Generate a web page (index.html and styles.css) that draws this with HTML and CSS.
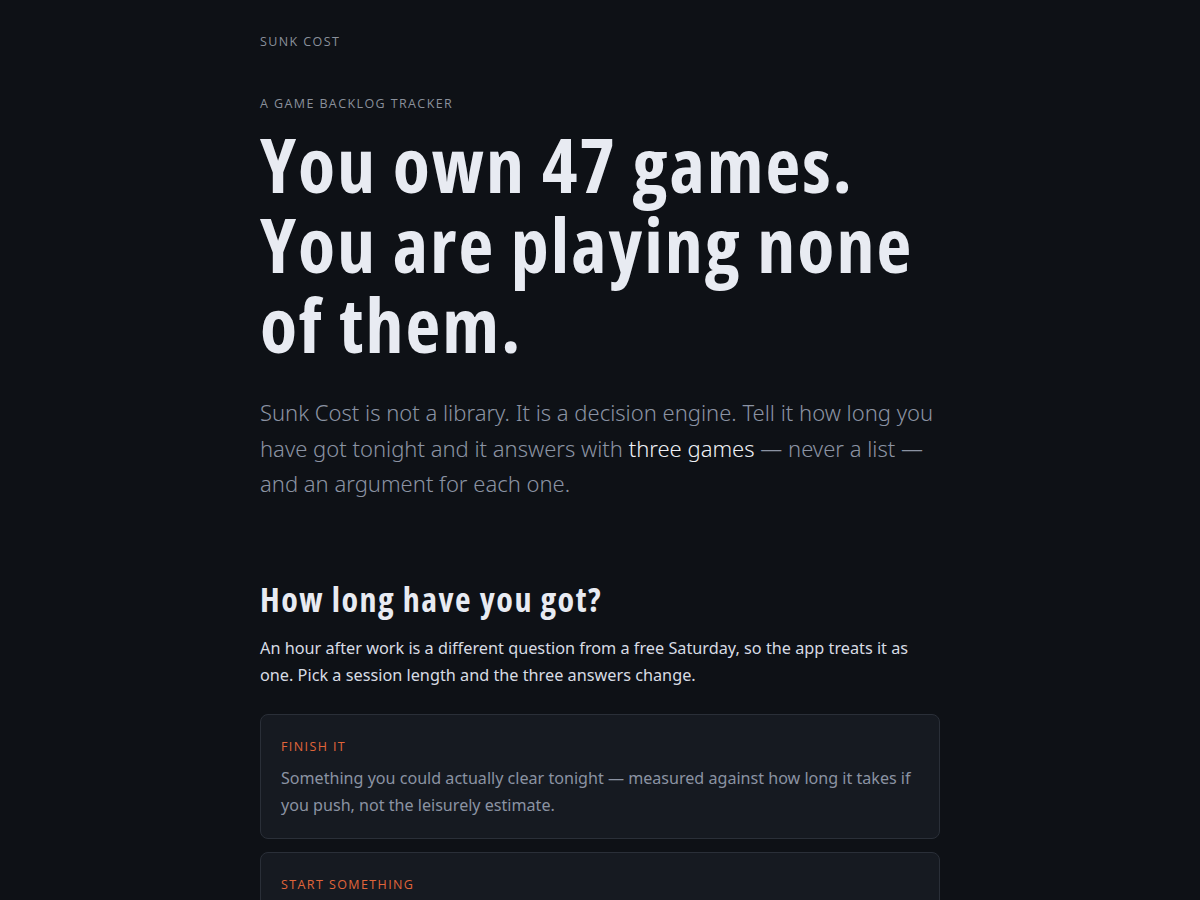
FILE: index.html
```html
<!DOCTYPE html>
<html lang="en">
<head>
<meta charset="utf-8">
<title>Sunk Cost</title>
<link rel="stylesheet" href="styles.css">
</head>
<body>
<main class="page">
  <header class="brand">SUNK COST</header>
  <section class="hero">
    <p class="eyebrow">A GAME BACKLOG TRACKER</p>
    <h1 class="title">You own 47 games.<br>You are playing none of them.</h1>
    <p class="lead">Sunk Cost is not a library. It is a decision engine. Tell it how long you have got tonight and it answers with <span class="hl">three games</span> — never a list — and an argument for each one.</p>
  </section>
  <section class="session">
    <h2 class="section-title">How long have you got?</h2>
    <p class="section-text">An hour after work is a different question from a free Saturday, so the app treats it as one. Pick a session length and the three answers change.</p>
    <div class="cards">
      <div class="card">
        <p class="card-label">FINISH IT</p>
        <p class="card-text">Something you could actually clear tonight — measured against how long it takes if you push, not the leisurely estimate.</p>
      </div>
      <div class="card">
        <p class="card-label">START SOMETHING</p>
        <p class="card-text">Something new that respects the time you have — a game whose opening hours are worth sitting down for.</p>
      </div>
    </div>
  </section>
</main>
</body>
</html>
```
FILE: styles.css
```css
html, body {
  margin: 0;
  padding: 0;
  background: #0e1116;
}
body {
  font-family: "Noto Sans", "Open Sans", sans-serif;
  color: #d8dce4;
}
.page {
  width: 680px;
  margin: 0 auto;
  padding-top: 34px;
}
.brand,
.eyebrow {
  font-family: "Open Sans", sans-serif;
  font-size: 12.5px;
  letter-spacing: 1.4px;
  color: #8a909b;
  line-height: 16px;
}
.hero {
  margin-top: 46px;
}
.eyebrow {
  margin: 0;
}
.title {
  margin: 11.5px 0 0;
  font-family: "Open Sans", sans-serif;
  font-stretch: 75%;
  font-weight: 700;
  font-size: 76px;
  line-height: 80px;
  letter-spacing: 2px;
  color: #e8ebf2;
}
.lead {
  margin: 31.5px 0 0;
  font-family: "Noto Sans", sans-serif;
  font-weight: 300;
  font-size: 22px;
  line-height: 35.5px;
  color: #8b93a3;
}
.hl {
  color: #eef0f5;
}
.session {
  margin-top: 75.5px;
}
.section-title {
  margin: 0;
  font-family: "Open Sans", sans-serif;
  font-stretch: 75%;
  font-weight: 700;
  font-size: 34px;
  line-height: 44px;
  letter-spacing: 1.5px;
  color: #e8ebf2;
}
.section-text {
  margin: 14px 0 0;
  font-size: 16.25px;
  line-height: 27px;
  color: #d8dce4;
}
.cards {
  margin-top: 25px;
  display: flex;
  flex-direction: column;
  gap: 13px;
}
.card {
  background: #161a21;
  border: 1px solid #2a2f38;
  border-radius: 8px;
  padding: 24px 20px 19px;
}
.card-label {
  margin: 0;
  font-family: "Open Sans", sans-serif;
  font-size: 12.5px;
  letter-spacing: 1.4px;
  color: #e0653a;
  line-height: 16px;
}
.card-text {
  margin: 10px 0 0;
  font-size: 16.1px;
  line-height: 27px;
  color: #8b93a3;
}
```
